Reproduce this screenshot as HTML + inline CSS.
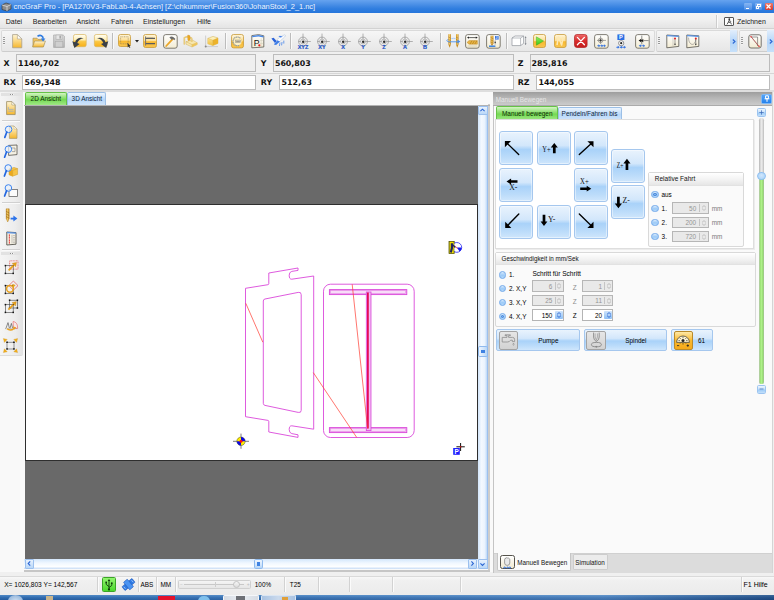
<!DOCTYPE html>
<html lang="de">
<head>
<meta charset="utf-8">
<title>cncGraF Pro</title>
<style>
*{box-sizing:border-box;margin:0;padding:0}
html,body{width:774px;height:600px;overflow:hidden;background:#f0f0f0}
body{position:relative;font-family:"Liberation Sans",sans-serif;font-size:7px;color:#000;line-height:1}
.a{position:absolute}
.t{position:absolute;white-space:nowrap;line-height:1}
svg{position:absolute;overflow:visible}
#title{left:0;top:0;width:774px;height:13px;background:linear-gradient(#66a3ef 0,#4a8fe6 35%,#2f7ddf 68%,#2676db)}
#title .t{color:#edf3fd;font-size:7.45px;left:13.5px;top:2.6px}
#menu{left:0;top:13px;width:774px;height:16px;background:linear-gradient(#f4f4f4,#efefef 50%,#e4e4e4);border-bottom:1px solid #d2d2d2}
#menu .t{top:5.2px;font-size:7px;color:#1a1a1a}
.tbar{position:absolute;top:30px;height:22px;background:linear-gradient(#f6f6f6,#eeeeee 50%,#e7e7e7);border:1px solid #dadada;border-bottom-color:#cdcdcd;border-radius:2px}
.grip{position:absolute;width:2px;height:8px;top:37px;background:repeating-linear-gradient(#9a9a9a 0 1px,#f4f4f4 1px 2px)}
.vsep{position:absolute;width:1px;top:33px;height:16px;background:#bcbcbc;box-shadow:1px 0 0 #fafafa}
.chev{position:absolute;top:30px;height:22px;background:linear-gradient(#e2eefc,#b4d5f8 55%,#c6e0fa)}
.bold{font-family:"DejaVu Sans","Liberation Sans",sans-serif;font-weight:bold;font-size:7.9px;color:#111}
.box{position:absolute;border:1px solid #bcbcbc;background:#efefef}
.boxw{position:absolute;border:1px solid #bcbcbc;background:#fff}
.tab{position:absolute;border:1px solid #9bbfe6;border-bottom:none;border-radius:2px 2px 0 0;font-size:6.4px}
.tab.g{background:linear-gradient(#d4f4c4,#74da52 55%,#a0e786);border-color:#66c247}
.tab.b{background:linear-gradient(#edf5fe,#b7d7f9 55%,#cfe4fb)}
.mb{position:absolute;width:34px;height:34px;border:1px solid #a5c7ee;border-radius:3px;background:linear-gradient(#e9f3fd 0%,#d3e7fb 42%,#a9d2f9 55%,#bcdcfa 80%,#cfe6fc 100%);box-shadow:inset 0 0 0 1px rgba(255,255,255,.45)}
.grp{position:absolute;border:1px solid #d9d9d9;border-radius:2px;background:#fafafa}
.grp .h{position:absolute;left:0;top:0;right:0;height:12px;background:linear-gradient(#fff,#f3f3f3 55%,#e6e6e6);border-bottom:1px solid #e2e2e2}
.rad{position:absolute;width:7.6px;height:7.6px;border-radius:50%;border:.9px solid #72a9ea;background:linear-gradient(#d6e9fc,#9ccaf7 55%,#b4d8fa)}
.rad.on::after{content:"";position:absolute;box-sizing:border-box;left:1.1px;top:1.1px;width:3.6px;height:3.6px;border-radius:50%;background:#7db2ee;border:.7px solid #3f7fd8}
.sp{position:absolute;height:11.5px;border:1px solid #b6b6b6;background:#e9e9e9}
.sp.w{background:#fff;border-color:#b4b4b4}
.sp .n{position:absolute;top:2.6px;font-size:6.4px;color:#949494;text-align:right}
.sp.w .n{color:#000}
.sp .d{position:absolute;top:1px;bottom:1px;width:1px;background:#c4c4c4}
.sp .u{position:absolute;top:1px;bottom:1px;background:#e2e2e2}
.sp.w .u{background:linear-gradient(#cfe4fb,#8fc0f5);border-radius:1px}
.s64{font-size:6.4px}
.wb{position:absolute;border:1px solid #a5c7ee;border-radius:2px;background:linear-gradient(#e9f3fd 0%,#d3e7fb 42%,#a9d2f9 55%,#bcdcfa 80%,#cfe6fc 100%)}
.ib{position:absolute;border:1px solid #a3a3a3;border-radius:2px;background:linear-gradient(#e6e6e6,#d2d2d2)}
.ssep{position:absolute;top:577px;height:15px;width:1px;background:#d2d2d2;box-shadow:1px 0 0 #fbfbfb}
</style>
</head>
<body>
<div id="title" class="a">
<svg style="left:1px;top:1px" width="11" height="11" viewBox="0 0 11 11"><path d="M1 4 L5 2 L10 3.5 L10 8 L6 10 L1 8.5Z" fill="#8d8d8d" stroke="#3c3c3c" stroke-width=".7"/><path d="M1 4 L6 5.5 L10 3.5 M6 5.5 L6 10" stroke="#e8e8e8" stroke-width=".7" fill="none"/></svg>
<span class="t">cncGraF Pro - [PA1270V3-FabLab-4-Achsen] [Z:\chkummer\Fusion360\JohanStool_2_1.nc]</span>
<div class="a" style="left:744px;top:3px;width:7.6px;height:7px;border-radius:1.2px;background:linear-gradient(#86b6f3,#4f8fe6)"></div>
<div class="a" style="left:745.5px;top:7.6px;width:3.6px;height:1.3px;background:#fff"></div>
<div class="a" style="left:754.6px;top:3px;width:7.6px;height:7px;border-radius:1.2px;background:linear-gradient(#86b6f3,#4f8fe6)"></div>
<div class="a" style="left:757.3px;top:4.2px;width:3.6px;height:3px;border:.8px solid #fff;border-top-width:1.2px"></div>
<div class="a" style="left:755.8px;top:5.9px;width:3.6px;height:3px;border:.8px solid #fff;border-top-width:1.2px;background:#5a96ea"></div>
<div class="a" style="left:765.2px;top:3px;width:7.6px;height:7px;border-radius:1.2px;background:linear-gradient(#f07a6a,#d93a2c)"></div>
<svg style="left:766.4px;top:4.2px" width="5" height="5" viewBox="0 0 5 5"><path d="M.5 .5L4.5 4.5M4.5 .5L.5 4.5" stroke="#fff" stroke-width="1.2"/></svg>
</div>
<div id="menu" class="a">
<span class="t" style="left:5.8px">Datei</span>
<span class="t" style="left:32.8px">Bearbeiten</span>
<span class="t" style="left:76.5px">Ansicht</span>
<span class="t" style="left:111px">Fahren</span>
<span class="t" style="left:143px">Einstellungen</span>
<span class="t" style="left:197px">Hilfe</span>
<div class="a" style="left:716px;top:2px;width:1px;height:13px;background:#cdcdcd;box-shadow:1px 0 0 #fbfbfb"></div>
<div class="a" style="left:724px;top:4.2px;width:9.5px;height:9.2px;border:.8px solid #555;border-radius:1px;background:#fdfdfd"></div>
<svg style="left:725.5px;top:5.3px" width="7" height="7" viewBox="0 0 7 7"><circle cx="3.3" cy="1.2" r=".9" fill="#333"/><path d="M3.3 2 L2.3 4.2 L1 6.4 M2.3 4.2 L4.6 4.6 L5.5 6.4 M3 2.6 L5.2 3.6" stroke="#333" stroke-width=".8" fill="none"/></svg>
<span class="t" style="left:737px">Zeichnen</span>
</div>
<svg width="0" height="0" style="position:absolute"><defs>
<linearGradient id="gO" x1="0" y1="0" x2="0" y2="1"><stop offset="0" stop-color="#fff6da"/><stop offset=".46" stop-color="#fde09a"/><stop offset=".56" stop-color="#f8b930"/><stop offset="1" stop-color="#f9c650"/></linearGradient>
<linearGradient id="gO2" x1="0" y1="0" x2="0" y2="1"><stop offset="0" stop-color="#fffef6"/><stop offset=".42" stop-color="#ffefb6"/><stop offset=".58" stop-color="#fbc744"/><stop offset="1" stop-color="#f8b018"/></linearGradient>
<linearGradient id="gY" x1="0" y1="0" x2="0" y2="1"><stop offset="0" stop-color="#fff6d6"/><stop offset="1" stop-color="#f5b62c"/></linearGradient>
<linearGradient id="gY2" x1="0" y1="0" x2="0" y2="1"><stop offset="0" stop-color="#fae08a"/><stop offset="1" stop-color="#f0bd3a"/></linearGradient>
<linearGradient id="gC" x1="0" y1="0" x2="0" y2="1"><stop offset="0" stop-color="#ffffff"/><stop offset="1" stop-color="#f3ecd2"/></linearGradient>
<linearGradient id="gG" x1="0" y1="0" x2="0" y2="1"><stop offset="0" stop-color="#dcdcdc"/><stop offset="1" stop-color="#b4b4b4"/></linearGradient>
<linearGradient id="gR" x1="0" y1="0" x2="0" y2="1"><stop offset="0" stop-color="#ee6b6b"/><stop offset=".5" stop-color="#d92a2a"/><stop offset="1" stop-color="#c21d1d"/></linearGradient>
<linearGradient id="gB" x1="0" y1="0" x2="0" y2="1"><stop offset="0" stop-color="#6db1ff"/><stop offset="1" stop-color="#1c62d8"/></linearGradient>
<linearGradient id="gD" x1="0" y1="0" x2="1" y2="0"><stop offset="0" stop-color="#c98a1c"/><stop offset=".5" stop-color="#f7d36b"/><stop offset="1" stop-color="#b97912"/></linearGradient>
<linearGradient id="gGr" x1="0" y1="0" x2="0" y2="1"><stop offset="0" stop-color="#8cf05a"/><stop offset="1" stop-color="#3cc41c"/></linearGradient>
</defs></svg>
<div class="tbar" style="left:1px;width:654px"></div>
<div class="tbar" style="left:655.5px;width:82px"></div>
<div class="tbar" style="left:738.5px;width:36px"></div>
<div class="chev" style="left:729.5px;width:7.5px"></div>
<div class="chev" style="left:766.5px;width:7.5px"></div>
<svg style="left:731.5px;top:39px" width="4" height="5" viewBox="0 0 4 5"><path d="M.8 .5 L3 2.5 L.8 4.5" fill="none" stroke="#2b66d4" stroke-width="1.1"/></svg>
<svg style="left:769px;top:39px" width="4" height="5" viewBox="0 0 4 5"><path d="M.8 .5 L3 2.5 L.8 4.5" fill="none" stroke="#2b66d4" stroke-width="1.1"/></svg>
<div class="grip" style="left:3px"></div>
<div class="grip" style="left:657.5px"></div>
<div class="grip" style="left:740.5px"></div>
<div class="vsep" style="left:112px"></div>
<div class="vsep" style="left:224.5px"></div>
<div class="vsep" style="left:290.3px"></div>
<div class="vsep" style="left:439.5px"></div>
<div class="vsep" style="left:505.6px"></div>
<svg style="left:12.4px;top:33.8px" width="10.4" height="14.4" viewBox="0 0 10.4 14.4"><path d="M.6 .6 H5.4 L9.8 5 V13.8 H.6Z" fill="url(#gY)" stroke="#a9a08a" stroke-width=".8"/><path d="M5.4 .6 V5 H9.8Z" fill="#fffef8" stroke="#a9a08a" stroke-width=".6"/></svg>
<svg style="left:31.6px;top:34px" width="14" height="14" viewBox="0 0 14 14"><path d="M1 4.2 H5 L6 5.4 H11 V12.6 H1Z" fill="#f6c55a" stroke="#a8925c" stroke-width=".7"/><path d="M.6 13 L2.6 7 H13.4 L11.4 13Z" fill="url(#gY)" stroke="#a8925c" stroke-width=".7"/><path d="M5.5 2.2 C8.5 .4 11.2 1.8 11.2 4.8" fill="none" stroke="#2f7be0" stroke-width="1.6"/><path d="M8.8 4.4 H13.4 L11.1 7.6Z" fill="#2f7be0"/></svg>
<svg style="left:52.6px;top:34px" width="12" height="14" viewBox="0 0 12 14"><path d="M.6 1 H10.2 L11.4 2.2 V13.4 H.6Z" fill="url(#gG)" stroke="#a9a9a9" stroke-width=".7"/><rect x="3" y="1" width="6" height="4.2" fill="#e6e6e6" stroke="#a4a4a4" stroke-width=".5"/><rect x="6.4" y="1.6" width="1.6" height="3" fill="#a8a8a8"/><rect x="2.2" y="7.6" width="7.6" height="5.4" fill="#cfcfcf" stroke="#a9a9a9" stroke-width=".5"/></svg>
<svg style="left:72px;top:33.6px" width="15" height="15" viewBox="0 0 15 15"><rect x="1.5" y=".5" width="12.7" height="12.2" rx="1.8" fill="url(#gO2)" stroke="#d9b45c" stroke-width=".7"/><path d="M11.6 4.3 C8 2.8 4 4.4 3.1 8.3 L.3 7.2 L2.4 14 L7.6 9.9 L5.3 9.1 C6.2 6.4 8.6 4.8 11.6 4.3Z" fill="#3a4048"/></svg>
<svg style="left:92.6px;top:33.6px" width="15" height="15" viewBox="0 0 15 15"><g transform="translate(15.6,0) scale(-1,1)"><rect x="1.5" y=".5" width="12.7" height="12.2" rx="1.8" fill="url(#gO2)" stroke="#d9b45c" stroke-width=".7"/><path d="M11.6 4.3 C8 2.8 4 4.4 3.1 8.3 L.3 7.2 L2.4 14 L7.6 9.9 L5.3 9.1 C6.2 6.4 8.6 4.8 11.6 4.3Z" fill="#3a4048"/></g></svg>
<svg style="left:117.6px;top:34px" width="14" height="14" viewBox="0 0 14 14"><rect x="0.5" y="0.5" width="12" height="12" rx="2" fill="url(#gO)" stroke="#c89b3a" stroke-width="0.8"/><rect x="2.6" y="2.8" width="7.6" height="7" fill="none" stroke="#8a7a5a" stroke-width=".6" stroke-dasharray="1 .7"/><path d="M9.4 8.8 L12.6 12 L11.4 12.2 L12.4 13.8 L11.6 14 L10.8 12.6 L9.8 13.4Z" fill="#333"/></svg>
<svg style="left:134.6px;top:40.4px" width="4" height="3" viewBox="0 0 4 3"><path d="M0 0H4L2 2.6Z" fill="#222"/></svg>
<svg style="left:142.6px;top:34px" width="14" height="14" viewBox="0 0 14 14"><rect x="0.5" y="0.5" width="13" height="13" rx="2" fill="url(#gO)" stroke="#c89b3a" stroke-width="0.8"/><path d="M2 4.4 H12 M2 9.6 H12" stroke="#5b5b5b" stroke-width="1.1"/><path d="M2.6 2.4 V11.6" stroke="#777" stroke-width="1"/><path d="M5 4.4V3.2M7 4.4V3.2M9 4.4V3.2" stroke="#777" stroke-width=".5"/></svg>
<svg style="left:163px;top:33.6px" width="15" height="15" viewBox="0 0 15 15"><rect x="0.6" y="0.6" width="13.6" height="13.6" rx="2.2" fill="url(#gC)" stroke="#6a675c" stroke-width="0.85"/><path d="M3.2 12 L9.6 5.2" stroke="#eaa62a" stroke-width="1.8" stroke-linecap="round"/><path d="M6.4 3.2 C8.6 1.8 10.6 2.6 12.4 5 L11.2 6.2 L10 5 L8.8 6 L7.6 4.8Z" fill="#6b6b6b"/></svg>
<svg style="left:183.4px;top:34px" width="15" height="14" viewBox="0 0 15 14"><path d="M3 7.6 L9.4 6 L14.2 8.8 L14.2 10.6 L9 13 L3 10.2Z" fill="#f8e7ad" stroke="#d0b268" stroke-width=".5"/><path d="M3 7.6 L9 10.6 L14.2 8.8 M9 10.6 V13" stroke="#cfae5c" stroke-width=".5" fill="none"/><path d="M9 10.6 L14.2 8.8 V10.6 L9 13Z" fill="#eec55a"/><path d="M1.4 10.4 V3.6 L4.2 2.6 L8.6 4.2 V8" fill="none" stroke="#d8b660" stroke-width="1.5" stroke-linejoin="round"/><path d="M1.4 10.4 V3.6 L4.2 2.6 L8.6 4.2 V8" fill="none" stroke="#f7dc8c" stroke-width=".7" stroke-linejoin="round"/><path d="M4.8 1 L7 1.8 V5.6 L5.8 7 L4.8 5.2Z" fill="#f0ac22" stroke="#c98c18" stroke-width=".4"/></svg>
<svg style="left:204px;top:34px" width="15" height="14" viewBox="0 0 15 14"><path d="M1.6 1.6 V12.6 H14" stroke="#b4b4b4" stroke-width=".55" fill="none"/><circle cx="1.7" cy="12.5" r="1" fill="#8a8a8a"/><path d="M3.8 4.4 L9 2.4 L14 4 L14 9.4 L8.8 11.6 L3.8 9.8Z" fill="#fdf0ba" stroke="#d2b050" stroke-width=".5"/><path d="M3.8 4.4 L8.8 6.2 V11.6 L3.8 9.8Z" fill="url(#gY2)"/><path d="M8.8 6.2 L14 4 V9.4 L8.8 11.6Z" fill="#ecb22a"/><path d="M3.8 4.4 L8.8 6.2 L14 4 M8.8 6.2 V11.6" stroke="#d2a840" stroke-width=".4" fill="none"/></svg>
<svg style="left:230.6px;top:33.8px" width="13" height="14.4" viewBox="0 0 13 14.4"><rect x="0.5" y="0.5" width="12" height="13.4" rx="2" fill="url(#gO)" stroke="#c89b3a" stroke-width="0.8"/><circle cx="6.5" cy="7.4" r="4.3" fill="#fdf0c4" stroke="#e9c05c" stroke-width=".5"/><path d="M9.2 4 A4.4 4.4 0 1 0 8.6 11.2" fill="none" stroke="#7f95b4" stroke-width="1.1" stroke-dasharray="1.1 .6"/><rect x="4.2" y="6" width="5.6" height="2.8" fill="#d9d2bc" stroke="#8f8870" stroke-width=".4"/><path d="M5.2 7.4 H8.8" stroke="#6e6a5c" stroke-width=".6"/></svg>
<svg style="left:250.6px;top:33.6px" width="14" height="15" viewBox="0 0 14 15"><path d="M.8 1.6 L7.6 .6 L12.8 1.8 V13 L.8 13.8Z" fill="url(#gC)" stroke="#5b5952" stroke-width=".8" stroke-linejoin="round"/><path d="M1.2 1.9 L7.6 1 L12.4 2.1 V3.5 L7.6 2.5 L1.2 3.3Z" fill="#4a8ae8"/><path d="M10.2 4.2 V12.4 M8.8 6.6 H12.2 M8.8 9.4 H12.2" stroke="#c2bda8" stroke-width=".4"/><text x="2.8" y="11.6" textLength="5.8" lengthAdjust="spacingAndGlyphs" font-family="Liberation Sans,sans-serif" font-size="9.8" fill="#111">P</text><circle cx="8.3" cy="11.3" r="1.1" fill="#e81818"/></svg>
<svg style="left:271px;top:34.4px" width="15" height="13" viewBox="0 0 15 13"><path d="M3.4 8.6 C6 5 9.6 2.4 13.6 .8 C14.8 .8 14.4 2.2 13.6 3 C11 5.6 8 8 5 10.4Z" fill="#fbfcfe" stroke="#a9bcd6" stroke-width=".5"/><path d="M.4 4.4 L2.6 3.8 L5.6 7 L4 9Z" fill="#2a62d8"/><path d="M6.4 6.2 L2.8 10.6 L5 11 L9 7.4Z" fill="#3f7ee8"/><path d="M9.6 3.6 L7.4 2.2 L9 1.8 L11.8 2.8Z" fill="#3f7ee8"/><path d="M9 8.6 L8.4 12 M11 8 L10.6 11.4 M12.8 6.6 L12.8 9.6" stroke="#4a86ea" stroke-width=".8"/></svg>
<svg style="left:294.6px;top:33.1px" width="16" height="17" viewBox="0 0 16 17"><path d="M8 .6 V10.6 M3.4 8.5 H15.8" stroke="#7a7a7a" stroke-width=".55"/><circle cx="8" cy="8.5" r="4.4" fill="none" stroke="#8e8e8e" stroke-width=".7"/><circle cx="8" cy="8.5" r="2.4" fill="#f4f4f4" stroke="#8a8a8a" stroke-width=".55"/><circle cx="8.2" cy="8.8" r="1.25" fill="#2c2c2c"/><text x="8" y="15.9" text-anchor="middle" font-family="Liberation Sans,sans-serif" font-weight="bold" font-size="5.5" fill="#1f55c8" stroke="#1f55c8" stroke-width=".2">XYZ</text></svg>
<svg style="left:314.3px;top:33.1px" width="16" height="17" viewBox="0 0 16 17"><path d="M8 .6 V10.6 M3.4 8.5 H15.8" stroke="#7a7a7a" stroke-width=".55"/><circle cx="8" cy="8.5" r="4.4" fill="none" stroke="#8e8e8e" stroke-width=".7"/><circle cx="8" cy="8.5" r="2.4" fill="#f4f4f4" stroke="#8a8a8a" stroke-width=".55"/><circle cx="8.2" cy="8.8" r="1.25" fill="#2c2c2c"/><text x="8" y="15.9" text-anchor="middle" font-family="Liberation Sans,sans-serif" font-weight="bold" font-size="5.5" fill="#1f55c8" stroke="#1f55c8" stroke-width=".2">XY</text></svg>
<svg style="left:334.7px;top:33.1px" width="16" height="17" viewBox="0 0 16 17"><path d="M8 .6 V10.6 M3.4 8.5 H15.8" stroke="#7a7a7a" stroke-width=".55"/><circle cx="8" cy="8.5" r="4.4" fill="none" stroke="#8e8e8e" stroke-width=".7"/><circle cx="8" cy="8.5" r="2.4" fill="#f4f4f4" stroke="#8a8a8a" stroke-width=".55"/><circle cx="8.2" cy="8.8" r="1.25" fill="#2c2c2c"/><text x="8" y="15.9" text-anchor="middle" font-family="Liberation Sans,sans-serif" font-weight="bold" font-size="5.5" fill="#1f55c8" stroke="#1f55c8" stroke-width=".2">X</text></svg>
<svg style="left:355.3px;top:33.1px" width="16" height="17" viewBox="0 0 16 17"><path d="M8 .6 V10.6 M3.4 8.5 H15.8" stroke="#7a7a7a" stroke-width=".55"/><circle cx="8" cy="8.5" r="4.4" fill="none" stroke="#8e8e8e" stroke-width=".7"/><circle cx="8" cy="8.5" r="2.4" fill="#f4f4f4" stroke="#8a8a8a" stroke-width=".55"/><circle cx="8.2" cy="8.8" r="1.25" fill="#2c2c2c"/><text x="8" y="15.9" text-anchor="middle" font-family="Liberation Sans,sans-serif" font-weight="bold" font-size="5.5" fill="#1f55c8" stroke="#1f55c8" stroke-width=".2">Y</text></svg>
<svg style="left:376px;top:33.1px" width="16" height="17" viewBox="0 0 16 17"><path d="M8 .6 V10.6 M3.4 8.5 H15.8" stroke="#7a7a7a" stroke-width=".55"/><circle cx="8" cy="8.5" r="4.4" fill="none" stroke="#8e8e8e" stroke-width=".7"/><circle cx="8" cy="8.5" r="2.4" fill="#f4f4f4" stroke="#8a8a8a" stroke-width=".55"/><circle cx="8.2" cy="8.8" r="1.25" fill="#2c2c2c"/><text x="8" y="15.9" text-anchor="middle" font-family="Liberation Sans,sans-serif" font-weight="bold" font-size="5.5" fill="#1f55c8" stroke="#1f55c8" stroke-width=".2">Z</text></svg>
<svg style="left:396.7px;top:33.1px" width="16" height="17" viewBox="0 0 16 17"><path d="M8 .6 V10.6 M3.4 8.5 H15.8" stroke="#7a7a7a" stroke-width=".55"/><circle cx="8" cy="8.5" r="4.4" fill="none" stroke="#8e8e8e" stroke-width=".7"/><circle cx="8" cy="8.5" r="2.4" fill="#f4f4f4" stroke="#8a8a8a" stroke-width=".55"/><circle cx="8.2" cy="8.8" r="1.25" fill="#2c2c2c"/><text x="8" y="15.9" text-anchor="middle" font-family="Liberation Sans,sans-serif" font-weight="bold" font-size="5.5" fill="#1f55c8" stroke="#1f55c8" stroke-width=".2">A</text></svg>
<svg style="left:417.3px;top:33.1px" width="16" height="17" viewBox="0 0 16 17"><path d="M8 .6 V10.6 M3.4 8.5 H15.8" stroke="#7a7a7a" stroke-width=".55"/><circle cx="8" cy="8.5" r="4.4" fill="none" stroke="#8e8e8e" stroke-width=".7"/><circle cx="8" cy="8.5" r="2.4" fill="#f4f4f4" stroke="#8a8a8a" stroke-width=".55"/><circle cx="8.2" cy="8.8" r="1.25" fill="#2c2c2c"/><text x="8" y="15.9" text-anchor="middle" font-family="Liberation Sans,sans-serif" font-weight="bold" font-size="5.5" fill="#1f55c8" stroke="#1f55c8" stroke-width=".2">B</text></svg>
<svg style="left:445.6px;top:34px" width="15" height="14" viewBox="0 0 15 14"><rect x="2.4" y=".2" width="2.5" height="10.4" fill="url(#gD)"/><path d="M2.4 10.6 h2.5 l-1.25 3.2Z" fill="#c68a1e"/><path d="M2.4 3 l2.2 1.2 M2.4 5.4 l2.2 1.2 M2.4 7.8 l2.2 1.2" stroke="#9c6a10" stroke-width=".5"/><rect x="10" y=".2" width="2.5" height="10.4" fill="url(#gD)"/><path d="M10 10.6 h2.5 l-1.25 3.2Z" fill="#c68a1e"/><path d="M10 3 l2.2 1.2 M10 5.4 l2.2 1.2 M10 7.8 l2.2 1.2" stroke="#9c6a10" stroke-width=".5"/><path d="M2 5.4 C.2 6.4 .6 7.6 3 7.8 H11.4" stroke="#4a92f2" stroke-width=".9" fill="none"/><path d="M14.4 7.6 L11.4 5.8 V9.4Z" fill="#3f8af0"/><path d="M5.4 4.6 C7 4.2 8.4 4.2 9.6 4.6" stroke="#7db2f6" stroke-width=".6" fill="none"/></svg>
<svg style="left:465.4px;top:33.6px" width="15" height="15" viewBox="0 0 15 15"><rect x="0.6" y="0.6" width="13.6" height="13.6" rx="2.2" fill="url(#gC)" stroke="#6a675c" stroke-width="0.85"/><path d="M2.6 3.6 H12.2" stroke="#222" stroke-width=".7"/><path d="M2.2 3.6 l1.8 -1.1 v2.2Z M12.6 3.6 l-1.8 -1.1 v2.2Z" fill="#222"/><path d="M2 8.4 L4 6.6 H12.4 V10.2 H4Z" fill="#e9b545" stroke="#b07c18" stroke-width=".4"/><path d="M5 10 l2 -3.2 M7.4 10 l2 -3.2 M9.8 10 l2 -3.2" stroke="#a87412" stroke-width=".6"/><path d="M2.6 12 H12.2" stroke="#bdb59a" stroke-width=".5"/></svg>
<svg style="left:486px;top:33.6px" width="15" height="15" viewBox="0 0 15 15"><rect x="0.6" y="0.6" width="13.6" height="13.6" rx="2.2" fill="url(#gC)" stroke="#6a675c" stroke-width="0.85"/><rect x="4.6" y="1.6" width="2.8" height="8" fill="url(#gD)"/><path d="M4.6 9.6 h2.8 l-1.4 2.4Z" fill="#c68a1e"/><path d="M4.6 3.4 l2.8 1.4 M4.6 5.8 l2.8 1.4 M4.6 8 l2.8 1.2" stroke="#9c6a10" stroke-width=".5"/><rect x="9" y="2" width="3.6" height="3.6" fill="#2f6fe0"/><path d="M9.8 2.8 h2 l-2 2 h2" stroke="#fff" stroke-width=".5" fill="none"/><path d="M3 12.2 H9.4" stroke="#2f7be0" stroke-width="1.4"/><path d="M9.2 6.4 V10.4" stroke="#444" stroke-width=".5"/><rect x="8.6" y="7.8" width="1.2" height="1.2" fill="#333"/></svg>
<svg style="left:510.6px;top:35px" width="16" height="12" viewBox="0 0 16 12"><path d="M1 3 L4 1 H12.6 V8.4 L9.6 10.6 H1Z" fill="#fff" stroke="#8f949b" stroke-width=".7"/><path d="M1 3 H9.6 V10.6 M9.6 3 L12.6 1" stroke="#8f949b" stroke-width=".6" fill="none"/><path d="M14.6 2.4 V9" stroke="#6b7078" stroke-width=".5"/><path d="M14.6 1.2 l-.9 1.6 h1.8Z M14.6 10 l-.9 -1.6 h1.8Z" fill="#6b7078"/></svg>
<svg style="left:533px;top:34px" width="13" height="14" viewBox="0 0 13 14"><rect x="0.5" y="0.5" width="12" height="13" rx="2" fill="url(#gO)" stroke="#c89b3a" stroke-width="0.8"/><path d="M3.4 2.8 L10.6 7 L3.4 11.2Z" fill="url(#gGr)" stroke="#2fa312" stroke-width=".4"/></svg>
<svg style="left:554px;top:34px" width="13" height="14" viewBox="0 0 13 14"><rect x="0.5" y="0.5" width="11.6" height="13" rx="2" fill="url(#gO)" stroke="#c89b3a" stroke-width="0.8"/><path d="M3 11 L4.4 3 L7.6 11 L9.2 3" stroke="#fde9b4" stroke-width="1.6" fill="none" stroke-linejoin="round"/></svg>
<svg style="left:574px;top:34px" width="14" height="14" viewBox="0 0 14 14"><rect x="0.5" y="0.5" width="12.6" height="13" rx="2.4" fill="url(#gR)" stroke="#b02020" stroke-width="0.7"/><path d="M3.4 3.4 L10.4 10.8 M10.4 3.4 L3.4 10.8" stroke="#fff" stroke-width="1.3" stroke-linecap="round"/></svg>
<svg style="left:593.8px;top:33.6px" width="15" height="15" viewBox="0 0 15 15"><rect x="0.6" y="0.6" width="13.6" height="13.6" rx="2.2" fill="url(#gC)" stroke="#6a675c" stroke-width="0.85"/><path d="M6.6 1.8 V10 M3 6.4 H12" stroke="#555" stroke-width=".5"/><circle cx="6.6" cy="6.4" r="2.3" fill="none" stroke="#777" stroke-width=".6"/><circle cx="6.6" cy="6.4" r="1.1" fill="#333"/><path d="M3.6 11.6 h1.4 l-.4 -.9 l1.4 1.1 l-1.4 1.1 l.4 -.9 h-1.4Z M6.6 11.6 h1.4 l-.4 -.9 l1.4 1.1 l-1.4 1.1 l.4 -.9 h-1.4Z M9.4 11.6 h1.2 l-.4 -.9 l1.4 1.1 l-1.4 1.1 l.4 -.9 h-1.2Z" fill="#2468e0" stroke="#2468e0" stroke-width=".4"/></svg>
<svg style="left:616px;top:33.6px" width="11" height="15" viewBox="0 0 11 15"><rect x="1.4" y=".4" width="7" height="5.6" fill="#2a6ee4"/><text x="2.9" y="5.3" font-family="Liberation Sans,sans-serif" font-weight="bold" font-size="5.6" fill="#fff">P</text><circle cx="5.2" cy="9.2" r="2.6" fill="#fff" stroke="#666" stroke-width=".7"/><circle cx="5.2" cy="9.2" r="1.1" fill="#222"/><path d="M.6 13 h1.6 l-.4 -.9 l1.5 1.1 l-1.5 1.1 l.4 -.9 h-1.6Z M4 13 h1.6 l-.4 -.9 l1.5 1.1 l-1.5 1.1 l.4 -.9 h-1.6Z M7.2 13 h1.4 l-.4 -.9 l1.5 1.1 l-1.5 1.1 l.4 -.9 h-1.4Z" fill="#2468e0" stroke="#2468e0" stroke-width=".4"/></svg>
<svg style="left:635px;top:33.6px" width="15" height="15" viewBox="0 0 15 15"><rect x="0.6" y="0.6" width="13.6" height="13.6" rx="2.2" fill="url(#gC)" stroke="#6a675c" stroke-width="0.85"/><path d="M6.8 1.6 V10.4 M7 6.6 H13.6" stroke="#444" stroke-width=".6"/><path d="M3.6 6.6 L6.4 4.8 L6 6.2 L8.6 5 L7.8 6.6 L8.6 8.2 L6 7 L6.4 8.4Z" fill="#111"/><path d="M4.2 11.6 h1.4 l-.4 -.9 l1.4 1.1 l-1.4 1.1 l.4 -.9 h-1.4Z M7.4 11.6 h1.4 l-.4 -.9 l1.4 1.1 l-1.4 1.1 l.4 -.9 h-1.4Z" fill="#2468e0" stroke="#2468e0" stroke-width=".4"/></svg>
<svg style="left:665.6px;top:33.6px" width="14" height="15" viewBox="0 0 14 15"><path d="M.8 1 L12.8 1.8 V12.4 L.8 13.8Z" fill="url(#gC)" stroke="#55534c" stroke-width=".8" stroke-linejoin="round"/><path d="M1 1 L12.8 1.8 V3 L1 2.2Z" fill="#5a95e8"/><path d="M9 4.4 V11" stroke="#444" stroke-width=".5"/><circle cx="9" cy="4.4" r="1" fill="#e02020"/><path d="M9 11.4 l-.9 -1.6 h1.8Z" fill="#333"/><path d="M7 3.4 V12" stroke="#999" stroke-width=".4"/></svg>
<svg style="left:686.4px;top:33.6px" width="14" height="15" viewBox="0 0 14 15"><path d="M.8 1 L12.8 1.8 V12.4 L.8 13.8Z" fill="url(#gC)" stroke="#55534c" stroke-width=".8" stroke-linejoin="round"/><path d="M1 1 L12.8 1.8 V3 L1 2.2Z" fill="#5a95e8"/><path d="M2.6 3.6 C2.6 12.4 9.6 12.4 9.8 5" stroke="#666" stroke-width=".5" fill="none"/><path d="M9.8 4.4 V11" stroke="#444" stroke-width=".5"/><circle cx="9.8" cy="4.6" r="1" fill="#e02020"/><path d="M9.8 11.4 l-.9 -1.6 h1.8Z" fill="#333"/></svg>
<svg style="left:748.4px;top:33.6px" width="14" height="15" viewBox="0 0 14 15"><rect x=".8" y=".8" width="12.4" height="13.2" rx="2.2" fill="url(#gC)" stroke="#55534c" stroke-width=".8"/><path d="M3.4 3 H9.6 V12 M3.4 3 L10.6 12.2" stroke="#555" stroke-width=".6" fill="none"/><path d="M2.8 2.4 L11 12.4" stroke="#e04040" stroke-width=".5"/><circle cx="11" cy="12.2" r=".7" fill="#e02020"/><circle cx="3" cy="2.8" r=".7" fill="#e02020"/></svg>
<div class="a" style="left:0;top:72.8px;width:774px;height:1px;background:#d6d6d6"></div>
<span class="t bold" style="left:3.6px;top:59.8px">X</span><div class="box" style="left:16px;top:54px;width:240px;height:17.6px"></div><span class="t bold" style="left:17.9px;top:59.8px">1140,702</span>
<span class="t bold" style="left:260.8px;top:59.8px">Y</span><div class="box" style="left:272.8px;top:54px;width:240.8px;height:17.6px"></div><span class="t bold" style="left:274.9px;top:59.8px">560,803</span>
<span class="t bold" style="left:517.8px;top:59.8px">Z</span><div class="box" style="left:529.8px;top:54px;width:240.2px;height:17.6px"></div><span class="t bold" style="left:531.6px;top:59.8px">285,816</span>
<span class="t bold" style="left:3.6px;top:78.8px">RX</span><div class="boxw" style="left:22px;top:74.5px;width:234px;height:15px"></div><span class="t bold" style="left:24.6px;top:78.8px">569,348</span>
<span class="t bold" style="left:260.8px;top:78.8px">RY</span><div class="boxw" style="left:279.4px;top:74.5px;width:234.2px;height:15px"></div><span class="t bold" style="left:281.6px;top:78.8px">512,63</span>
<span class="t bold" style="left:517.8px;top:78.8px">RZ</span><div class="boxw" style="left:536.2px;top:74.5px;width:233.4px;height:15px"></div><span class="t bold" style="left:538.4px;top:78.8px">144,055</span>
<div class="a" style="left:0;top:91.5px;width:22.5px;height:484px;background:#f9f9f9"></div><div class="a" style="left:0;top:91.5px;width:22.5px;height:264.4px;background:linear-gradient(90deg,#f5f5f5,#ededed 65%,#e2e2e2);border-bottom:1px solid #dcdcdc;border-radius:0 0 2px 0"></div>
<div class="a" style="left:1px;top:93px;width:20.5px;height:3.4px;background:#e2e2e2"></div><div class="a" style="left:9.5px;top:94px;width:4px;height:1.4px;background:repeating-linear-gradient(90deg,#8e8e8e 0 1px,#f4f4f4 1px 2px)"></div>
<div class="a" style="left:1px;top:251.6px;width:20.5px;height:3.4px;background:#e2e2e2"></div><div class="a" style="left:9.5px;top:252.6px;width:4px;height:1.4px;background:repeating-linear-gradient(90deg,#8e8e8e 0 1px,#f4f4f4 1px 2px)"></div>
<div class="a" style="left:2px;top:120px;width:18px;height:1px;background:#d0d0d0;box-shadow:0 1px 0 #fafafa"></div>
<div class="a" style="left:2px;top:201.6px;width:18px;height:1px;background:#d0d0d0;box-shadow:0 1px 0 #fafafa"></div>
<div class="a" style="left:2px;top:249px;width:18px;height:1px;background:#d0d0d0;box-shadow:0 1px 0 #fafafa"></div>
<svg style="left:6.4px;top:101px" width="10" height="14.4" viewBox="0 0 10 14.4"><path d="M.6 .6 H5.8 L9.2 4 V13.6 H.6Z" fill="url(#gY)" stroke="#9c8d62" stroke-width=".8"/><path d="M5.8 .6 V4 H9.2Z" fill="#fffdf2" stroke="#9c8d62" stroke-width=".5"/><path d="M2.4 6 V8.4 H7.6 M2.4 10.2 H7.6" stroke="#7fa6dc" stroke-width=".6" fill="none"/></svg>
<svg style="left:3.6px;top:124.6px" width="14" height="15" viewBox="0 0 14 15"><path d="M5.4 1 H10 L13 4 V13.4 H5.4Z" fill="url(#gY)" stroke="#a89a70" stroke-width=".7"/><path d="M10 1 V4 H13Z" fill="#fffdf2" stroke="#a89a70" stroke-width=".4"/><circle cx="4.6" cy="4.4" r="3.3" fill="#e6f0fc" fill-opacity=".7" stroke="#3f86f0" stroke-width="1"/><path d="M2.8 7.0 L0.7999999999999998 12.4" stroke="#2468e0" stroke-width="1.7" stroke-linecap="round"/></svg>
<svg style="left:3.6px;top:144.4px" width="14" height="15" viewBox="0 0 14 15"><path d="M4.6 1.4 L13 1 V10.6 L4.6 11.4Z" fill="#f5f1e4" stroke="#55534c" stroke-width=".8"/><path d="M7 4 H11 V7.6 H8" stroke="#666" stroke-width=".5" fill="none"/><circle cx="4.4" cy="5.2" r="3.3" fill="#e6f0fc" fill-opacity=".7" stroke="#3f86f0" stroke-width="1"/><path d="M2.6000000000000005 7.800000000000001 L0.6000000000000005 13.2" stroke="#2468e0" stroke-width="1.7" stroke-linecap="round"/></svg>
<svg style="left:3.6px;top:164.2px" width="14" height="14" viewBox="0 0 14 14"><path d="M5 5 L10 3.4 L13.6 4.6 V10.4 L8.6 12.2 L5 10.8Z" fill="#f6c347" stroke="#c99c30" stroke-width=".5"/><path d="M5 5 L8.6 6.4 L13.6 4.6 M8.6 6.4 V12.2" stroke="#c99c30" stroke-width=".5" fill="none"/><path d="M5 5 L8.6 6.4 V12.2 L5 10.8Z" fill="#eaa81e"/><circle cx="4.2" cy="4" r="3.3" fill="#e6f0fc" fill-opacity=".7" stroke="#3f86f0" stroke-width="1"/><path d="M2.4000000000000004 6.6 L0.40000000000000036 12" stroke="#2468e0" stroke-width="1.7" stroke-linecap="round"/></svg>
<svg style="left:3.6px;top:183.6px" width="14" height="15" viewBox="0 0 14 15"><rect x="5" y="5.6" width="8.4" height="6.8" fill="#fbfbfb" stroke="#555" stroke-width=".7"/><circle cx="4.4" cy="4" r="3.3" fill="#e6f0fc" fill-opacity=".7" stroke="#3f86f0" stroke-width="1"/><path d="M2.6000000000000005 6.6 L0.6000000000000005 12" stroke="#2468e0" stroke-width="1.7" stroke-linecap="round"/></svg>
<svg style="left:4px;top:208px" width="14" height="15" viewBox="0 0 14 15"><path d="M2.2 .8 H5.2 V10.4 L3.7 14 L2.2 10.4Z" fill="url(#gD)" stroke="#a8741a" stroke-width=".4"/><path d="M2.2 3.4 l3 1.6 M2.2 6 l3 1.6 M2.2 8.6 l3 1.6" stroke="#8e600c" stroke-width=".6"/><path d="M6.6 10.6 H10" stroke="#2a72ea" stroke-width="1.8"/><path d="M9.4 7.6 L13.4 10.6 L9.4 13.6Z" fill="#2a72ea"/></svg>
<svg style="left:5.6px;top:231.4px" width="11" height="15" viewBox="0 0 11 15"><path d="M.8 1 L10 1.6 V13.2 L.8 14Z" fill="#f7f3e6" stroke="#55534c" stroke-width=".9" stroke-linejoin="round"/><path d="M1 1 L10 1.6 V2.8 L1 2.3Z" fill="#5a95e8"/><path d="M3.4 3.6 V12.6" stroke="#e02020" stroke-width="1.2" stroke-dasharray="1.2 .7"/><path d="M6 3.8 V12.4" stroke="#888" stroke-width=".5"/><path d="M7.2 4.6H8.8M7.2 6.4H8.8M7.2 8.2H8.8M7.2 10H8.8M7.2 11.6H8.8" stroke="#777" stroke-width=".5"/></svg>
<svg style="left:4px;top:260px" width="15" height="15" viewBox="0 0 15 15"><rect x="5.6" y=".8" width="8.4" height="8.4" fill="#fde3e3" fill-opacity=".5" stroke="#e04040" stroke-width=".6" stroke-dasharray="1 .6"/><rect x="1.4" y="5.6" width="7.8" height="7.8" fill="none" stroke="#444" stroke-width=".6"/><rect x="0.65" y="4.85" width="1.5" height="1.5" fill="#111"/><rect x="8.45" y="4.85" width="1.5" height="1.5" fill="#111"/><rect x="0.65" y="12.65" width="1.5" height="1.5" fill="#111"/><rect x="8.45" y="12.65" width="1.5" height="1.5" fill="#111"/><path d="M4.6 10.4 L9.6 5.4" stroke="#e9a21c" stroke-width="1.7"/><path d="M12.6 2.4 l-4.4 .9 l3.5 3.5Z" fill="#e9a21c" stroke="#b57a10" stroke-width=".3"/></svg>
<svg style="left:4px;top:280px" width="15" height="15" viewBox="0 0 15 15"><path d="M9.4 1 L14 5.6 L9.4 10.2 L4.8 5.6Z" fill="none" stroke="#e04040" stroke-width=".6"/><rect x="1.4" y="5.6" width="7.8" height="7.8" fill="none" stroke="#444" stroke-width=".6"/><rect x="0.65" y="4.85" width="1.5" height="1.5" fill="#111"/><rect x="8.45" y="4.85" width="1.5" height="1.5" fill="#111"/><rect x="0.65" y="12.65" width="1.5" height="1.5" fill="#111"/><rect x="8.45" y="12.65" width="1.5" height="1.5" fill="#111"/><circle cx="6" cy="8.8" r="3.4" fill="none" stroke="#e9a21c" stroke-width="1.5"/><path d="M8.2 4 l3.4 1 l-2.2 2.6Z" fill="#e9a21c"/></svg>
<svg style="left:4px;top:299px" width="15" height="15" viewBox="0 0 15 15"><rect x="5.6" y="1.2" width="7.8" height="7.8" fill="none" stroke="#444" stroke-width=".6"/><rect x="4.85" y="0.45" width="1.5" height="1.5" fill="#111"/><rect x="12.65" y="0.45" width="1.5" height="1.5" fill="#111"/><rect x="4.85" y="8.25" width="1.5" height="1.5" fill="#111"/><rect x="12.65" y="8.25" width="1.5" height="1.5" fill="#111"/><rect x="1.4" y="5.6" width="7.8" height="7.8" fill="none" stroke="#444" stroke-width=".6"/><rect x="0.65" y="4.85" width="1.5" height="1.5" fill="#111"/><rect x="8.45" y="4.85" width="1.5" height="1.5" fill="#111"/><rect x="0.65" y="12.65" width="1.5" height="1.5" fill="#111"/><rect x="8.45" y="12.65" width="1.5" height="1.5" fill="#111"/><path d="M4.4 10.6 L9.4 5.6" stroke="#e9a21c" stroke-width="1.7"/><path d="M12.4 2.6 l-4.4 .9 l3.5 3.5Z" fill="#e9a21c" stroke="#b57a10" stroke-width=".3"/></svg>
<svg style="left:4px;top:319px" width="15" height="13" viewBox="0 0 15 13"><path d="M1 9.6 H13.6" stroke="#777" stroke-width=".5" stroke-dasharray="1 .6"/><path d="M9 2.6 C12 2.6 13.8 5.4 13.6 9.4 H9.6Z" fill="#fde3e3" fill-opacity=".6" stroke="#e04040" stroke-width=".5"/><path d="M2 9.2 L4 3.6 L5.4 9.2 M6 9.2 L7.4 4.4 L8.6 9.2" stroke="#444" stroke-width=".6" fill="none"/><path d="M3 9.8 C5 11.4 8 11.2 10 9.4" stroke="#e9a21c" stroke-width="1.4" fill="none"/><path d="M9 7.6 l3.2 .6 l-2 2.6Z" fill="#e9a21c"/></svg>
<svg style="left:3.4px;top:337.8px" width="15" height="15" viewBox="0 0 15 15"><rect x="4" y="4.2" width="7" height="6.8" fill="none" stroke="#555" stroke-width=".6"/><rect x="3.3" y="3.5" width="1.5" height="1.5" fill="#111"/><rect x="10.2" y="3.5" width="1.5" height="1.5" fill="#111"/><rect x="3.3" y="10.2" width="1.5" height="1.5" fill="#111"/><rect x="10.2" y="10.2" width="1.5" height="1.5" fill="#111"/><path d="M.4 .6 L4.2 1.4 L1.4 4.4Z M14.6 .6 L10.8 1.4 L13.6 4.4Z M.4 14.6 L4.2 13.8 L1.4 10.8Z M14.6 14.6 L10.8 13.8 L13.6 10.8Z" fill="#f2b01e" stroke="#c88a12" stroke-width=".3"/></svg>
<div class="a" style="left:0;top:90px;width:774px;height:1.6px;background:#dedede"></div><div class="a" style="left:22.6px;top:91.6px;width:470.6px;height:484px;background:#f9f9f9"></div>
<div class="tab g" style="left:24.5px;top:91.6px;width:42.3px;height:13px"></div><span class="t" style="left:30.6px;top:95.6px;font-size:6.4px;color:#0c2a05">2D Ansicht</span>
<div class="tab b" style="left:66.8px;top:92.4px;width:38.8px;height:12.2px"></div><span class="t" style="left:71.6px;top:96px;font-size:6.4px;color:#0e1f3c">3D Ansicht</span>
<div class="a" style="left:24.6px;top:105.5px;width:453px;height:453.3px;background:#696969"></div>
<div class="a" style="left:25.1px;top:204px;width:452.5px;height:256.5px;background:#fff;border:1.3px solid #2e2e2e"></div>
<div class="a" style="left:477.6px;top:105.2px;width:10.6px;height:463.8px;background:linear-gradient(90deg,#d3e6fb,#f4f9ff 40%,#eaf3fe 75%,#bcd8f7);border-right:1px solid #9cc0ee"></div>
<div class="a" style="left:478px;top:105.6px;width:9.6px;height:9.6px;background:linear-gradient(#e8f2fe,#b9d7f8);border:.6px solid #9cc0ee;border-radius:1px"></div>
<div class="a" style="left:478px;top:559.2px;width:9.6px;height:9.6px;background:linear-gradient(#e8f2fe,#b9d7f8);border:.6px solid #9cc0ee;border-radius:1px"></div>
<div class="a" style="left:478.3px;top:346.4px;width:9.4px;height:10.2px;background:linear-gradient(90deg,#eef5fe,#d6e8fc 50%,#b6d6f8);border:.7px solid #8fbaee;border-radius:1.8px"></div>
<div class="a" style="left:481.2px;top:350px;width:3.4px;height:2.8px;background:#3f82e2"></div>
<svg style="left:480.4px;top:108px" width="5" height="5" viewBox="0 0 5 5"><path d="M.4 3.2 L2.5 1.2 L4.6 3.2" fill="none" stroke="#2b66d4" stroke-width="1.1"/></svg>
<svg style="left:480.4px;top:562px" width="5" height="5" viewBox="0 0 5 5"><path d="M.4 1.4 L2.5 3.4 L4.6 1.4" fill="none" stroke="#2b66d4" stroke-width="1.1"/></svg>
<div class="a" style="left:24.4px;top:558.8px;width:453.2px;height:10.2px;background:linear-gradient(#d3e6fb,#f0f7ff 40%,#fdfeff 75%,#c8dcf6)"></div>
<div class="a" style="left:24.8px;top:559.2px;width:9.6px;height:9.4px;background:linear-gradient(#e8f2fe,#b9d7f8);border:.6px solid #9cc0ee;border-radius:1px"></div>
<div class="a" style="left:467.6px;top:559.2px;width:9.6px;height:9.4px;background:linear-gradient(#e8f2fe,#b9d7f8);border:.6px solid #9cc0ee;border-radius:1px"></div>
<div class="a" style="left:254.1px;top:559px;width:8.8px;height:9.6px;background:linear-gradient(#eef5fe,#d6e8fc 50%,#b6d6f8);border:.7px solid #8fbaee;border-radius:1.8px"></div>
<div class="a" style="left:256.9px;top:562px;width:3.1px;height:3.8px;background:#3f82e2"></div>
<svg style="left:27.2px;top:561.4px" width="5" height="5" viewBox="0 0 5 5"><path d="M3.2 .4 L1.2 2.5 L3.2 4.6" fill="none" stroke="#2b66d4" stroke-width="1.1"/></svg>
<svg style="left:470.4px;top:561.4px" width="5" height="5" viewBox="0 0 5 5"><path d="M1.4 .4 L3.4 2.5 L1.4 4.6" fill="none" stroke="#2b66d4" stroke-width="1.1"/></svg>
<div class="a" style="left:488.4px;top:104.4px;width:1.4px;height:466.4px;background:#cdcdcd"></div><div class="a" style="left:24.4px;top:570.4px;width:465.4px;height:1.4px;background:#c6c6c6"></div><div class="a" style="left:0;top:572px;width:493px;height:4px;background:#f0f0f0"></div><div class="a" style="left:24.4px;top:104.5px;width:465.4px;height:1px;background:#b2b2b2"></div>
<svg style="left:0;top:0" width="774" height="600" viewBox="0 0 774 600" fill="none"><path d="M245.5 288.3 L268 284.7 Q268.8 284.5 268.8 283.7 L268.8 273 L298 268 L298 270.4 L291.8 271.4 Q289.2 272 289.2 275.2 Q289.2 279.4 291.8 279.2 L313.7 276 L313.7 429.2 L291.8 425.8 Q289.2 425.6 289.2 429.6 Q289.2 433 291.8 433.6 L298 434.8 L298 437.4 L268.8 432 L268.8 421.4 Q268.8 420.6 268 420.4 L245.5 416.7 Z" stroke="#da48da" stroke-width=".9"/><path d="M263.3 301 Q263.3 299.3 265 299 L298.2 292.4 Q301.2 291.8 301.2 294.6 L301.2 410.4 Q301.2 413 298.2 412.4 L265 405.4 Q263.3 405 263.3 403.4 Z" stroke="#da48da" stroke-width=".9"/><rect x="323.5" y="284.2" width="90.7" height="153.3" rx="7" stroke="#da48da" stroke-width=".9"/><rect x="329.4" y="289.6" width="77.4" height="5" fill="#efb4ef" stroke="#da48da" stroke-width=".9"/><rect x="330.6" y="290.8" width="75" height="2.6" fill="#f8dcf8" stroke="#e070e0" stroke-width=".4"/><rect x="329.4" y="427.6" width="77.4" height="5" fill="#efb4ef" stroke="#da48da" stroke-width=".9"/><rect x="330.6" y="428.8" width="75" height="2.6" fill="#f8dcf8" stroke="#e070e0" stroke-width=".4"/><rect x="366.3" y="292" width="4.7" height="138.6" fill="#f1bcf1" stroke="#da48da" stroke-width=".8"/><path d="M367.9 292.5 V428.6" stroke="#e4004e" stroke-width="1.7"/><path d="M245.8 303.3 L262.8 342.2 M313.3 372.6 L356.7 437.4 M352.2 284.3 L367.6 428.3" stroke="#ff3b30" stroke-width=".7"/><path d="M241 433.6 V448.8 M233 441.3 H249" stroke="#444" stroke-width=".7"/><circle cx="241" cy="441.3" r="4.2" fill="#ffee00" stroke="#222" stroke-width=".4"/><path d="M241 441.3 L241 437.1 A4.2 4.2 0 0 1 245.2 441.3Z M241 441.3 L241 445.5 A4.2 4.2 0 0 1 236.8 441.3Z" fill="#0a0ae6"/><circle cx="241" cy="441.3" r="1.5" fill="#ff1010"/><rect x="449" y="241.4" width="5.2" height="12.2" fill="#f1e200" stroke="#6d6a1a" stroke-width=".7"/><path d="M451.6 243 V252.6" stroke="#20206a" stroke-width="1.6"/><circle cx="456.8" cy="247.4" r="4.9" fill="#fff" stroke="#2a2af0" stroke-width=".8"/><path d="M456.8 247.4 L461.7 247.4 A4.9 4.9 0 0 1 459.6 251.4Z" fill="#1a1af0"/><rect x="449.2" y="241.6" width="4.8" height="11.8" fill="#f1e200" stroke="#55531a" stroke-width=".6"/><path d="M451.9 243.2 L451.9 248 L450.8 252.6" stroke="#23235e" stroke-width="2.2" fill="none"/><path d="M453 245 L455.4 247.4" stroke="#23235e" stroke-width="1.4"/><path d="M455 245.8 L457.6 248.8" stroke="#f03030" stroke-width=".7"/><rect x="453.2" y="448" width="6.6" height="6.8" fill="#1c1cff"/><text x="454.4" y="454" font-family="Liberation Sans,sans-serif" font-weight="bold" font-size="6.4" fill="#fff">P</text><path d="M460.6 443 V451 M456.4 446.8 H464.8" stroke="#111" stroke-width="1"/><rect x="459.9" y="446.1" width="1.4" height="1.4" fill="#d01010"/></svg>
<div class="a" style="left:492.6px;top:92.4px;width:280px;height:480.4px;background:#fafafa;border-left:1px solid #c4c4c4;border-right:1px solid #d4d4d4"></div>
<div class="a" style="left:493px;top:92.3px;width:279.4px;height:13.4px;background:linear-gradient(#9d9d9d,#b5b5b5 45%,#cbcbcb);border-bottom:1px solid #ababab"></div>
<span class="t " style="left:495.8px;top:96.8px;font-size:6.35px;color:#e6e6e6">Manuell Bewegen</span><div class="a" style="left:761.2px;top:93.6px;width:10.6px;height:10.2px;border-radius:1.6px;background:linear-gradient(#52a3f7,#2682ec);border:.6px solid #7db9f8"></div>
<svg style="left:763.6px;top:95px" width="6" height="8" viewBox="0 0 6 8"><path d="M1.6 .8 H4.4 V3.6 H1.6Z M.6 3.8 H5.4 M3 3.8 V6.8" stroke="#fff" stroke-width="1" fill="none"/></svg>
<div class="tab g" style="left:495.8px;top:106.4px;width:62px;height:13.2px"></div><span class="t " style="left:502px;top:110.7px;font-size:6.45px;color:#0c2a05">Manuell bewegen</span>
<div class="tab b" style="left:557.8px;top:107.2px;width:64.4px;height:12.4px"></div><span class="t " style="left:561.6px;top:111px;font-size:6.45px;color:#0e1f3c">Pendeln/Fahren bis</span>
<div class="a" style="left:494.6px;top:119.4px;width:259.6px;height:129.6px;background:#fff;border:1px solid #dedede;box-shadow:1px 1px 0 #ececec"></div>
<div class="mb" style="left:499.2px;top:131px"></div><div class="mb" style="left:537px;top:131px"></div><div class="mb" style="left:574.4px;top:131px"></div><div class="mb" style="left:499.2px;top:168px"></div><div class="mb" style="left:574.4px;top:168px"></div><div class="mb" style="left:499.2px;top:205px"></div><div class="mb" style="left:537px;top:205px"></div><div class="mb" style="left:574.4px;top:205px"></div><div class="mb" style="left:610.6px;top:149px"></div><div class="mb" style="left:610.6px;top:185.4px"></div>
<svg style="left:0;top:0" width="774" height="600" viewBox="0 0 774 600"><path d="M518.7 154.5 L507.34 143.54" stroke="#000" stroke-width="1.35" stroke-linecap="round"/><path d="M504.9 141.1 L511 141.1 L504.9 147.2 Z" fill="#000"/><path d="M579.3 154.5 L591.06 143.64" stroke="#000" stroke-width="1.35" stroke-linecap="round"/><path d="M593.5 141.2 L587.4 141.2 L593.5 147.3 Z" fill="#000"/><path d="M518.8 214 L507.64 225.46" stroke="#000" stroke-width="1.35" stroke-linecap="round"/><path d="M505.2 227.9 L511.3 227.9 L505.2 221.8 Z" fill="#000"/><path d="M579.3 214 L591.06 225.46" stroke="#000" stroke-width="1.35" stroke-linecap="round"/><path d="M593.5 227.9 L587.4 227.9 L593.5 221.8 Z" fill="#000"/><path d="M554.3 142.9 L557.8 147.5 H555.65 V153.3 H552.95 V147.5 H550.8Z" fill="#000"/><path d="M506.5 181.5 L511.1 178.6 V180.3 H517.5 V182.7 H511.1 V184.4Z" fill="#000"/><path d="M591.3 188.7 L586.7 185.8 V187.5 H580.2 V189.9 H586.7 V191.6Z" fill="#000"/><path d="M544 226 L547.4 221.4 H545.35 V214.8 H542.65 V221.4 H540.6Z" fill="#000"/><path d="M626.95 158.8 L630.5 163.4 H628.3 V170 H625.6 V163.4 H623.4Z" fill="#000"/><path d="M618.4 208.2 L622 203.6 H619.75 V196.8 H617.05 V203.6 H614.8Z" fill="#000"/><text x="542.3" y="152.4" textLength="8.2" lengthAdjust="spacingAndGlyphs" font-family="Liberation Serif,serif" font-size="8.2" fill="#111">Y+</text><text x="509.2" y="190.2" textLength="8.2" lengthAdjust="spacingAndGlyphs" font-family="Liberation Serif,serif" font-size="8.2" fill="#111">X-</text><text x="580.1" y="184" textLength="8.6" lengthAdjust="spacingAndGlyphs" font-family="Liberation Serif,serif" font-size="8.2" fill="#111">X+</text><text x="547.9" y="221.8" textLength="7.4" lengthAdjust="spacingAndGlyphs" font-family="Liberation Serif,serif" font-size="8.2" fill="#111">Y-</text><text x="616.8" y="168.2" textLength="6.6" lengthAdjust="spacingAndGlyphs" font-family="Liberation Serif,serif" font-size="8.2" fill="#111">Z+</text><text x="622.6" y="203" textLength="7.2" lengthAdjust="spacingAndGlyphs" font-family="Liberation Serif,serif" font-size="8.2" fill="#111">Z-</text></svg>
<div class="grp" style="left:647.8px;top:172.3px;width:96.6px;height:75px"><div class="h" style="height:12.4px"></div></div>
<span class="t " style="left:654.8px;top:175.6px;font-size:6.5px;color:#111">Relative Fahrt</span><div class="rad on" style="left:651.4px;top:190.8px"></div><span class="t s64" style="left:661.4px;top:191.8px;">aus</span><div class="rad" style="left:651.4px;top:204.6px"></div><span class="t s64" style="left:661.6px;top:205.7px;">1.</span><div class="sp" style="left:672px;top:202.4px;width:37px"><span class="n" style="left:0;width:23.2px">50</span><div class="d" style="left:25.6px"></div><svg style="left:28px;top:2px" width="6" height="6" viewBox="0 0 6 6"><path d="M1 2.4 L3 .6 L5 2.4 M1 3.6 L3 5.4 L5 3.6" fill="none" stroke="#b5b5b5" stroke-width=".8"/></svg></div><span class="t s64" style="left:711.8px;top:205.7px;color:#7a7a7a">mm</span>
<div class="rad" style="left:651.4px;top:218.8px"></div><span class="t s64" style="left:661.6px;top:219.9px;">2.</span><div class="sp" style="left:672px;top:216.6px;width:37px"><span class="n" style="left:0;width:23.2px">200</span><div class="d" style="left:25.6px"></div><svg style="left:28px;top:2px" width="6" height="6" viewBox="0 0 6 6"><path d="M1 2.4 L3 .6 L5 2.4 M1 3.6 L3 5.4 L5 3.6" fill="none" stroke="#b5b5b5" stroke-width=".8"/></svg></div><span class="t s64" style="left:711.8px;top:219.9px;color:#7a7a7a">mm</span>
<div class="rad" style="left:651.4px;top:232.8px"></div><span class="t s64" style="left:661.6px;top:233.9px;">3.</span><div class="sp" style="left:672px;top:230.6px;width:37px"><span class="n" style="left:0;width:23.2px">720</span><div class="d" style="left:25.6px"></div><svg style="left:28px;top:2px" width="6" height="6" viewBox="0 0 6 6"><path d="M1 2.4 L3 .6 L5 2.4 M1 3.6 L3 5.4 L5 3.6" fill="none" stroke="#b5b5b5" stroke-width=".8"/></svg></div><span class="t s64" style="left:711.8px;top:233.9px;color:#7a7a7a">mm</span>
<div class="grp" style="left:494.6px;top:252px;width:261.6px;height:74.6px"><div class="h" style="height:11.6px"></div></div>
<span class="t " style="left:501.6px;top:256.1px;font-size:6.28px;color:#111">Geschwindigkeit in mm/Sek</span><div class="rad" style="left:498.6px;top:271.1px"></div><span class="t s64" style="left:509px;top:272.2px;">1.</span><div class="rad" style="left:498.6px;top:284.8px"></div><span class="t s64" style="left:509px;top:285.9px;">2. X,Y</span><div class="rad" style="left:498.6px;top:298.6px"></div><span class="t s64" style="left:509px;top:299.7px;">3. X,Y</span><div class="rad on" style="left:498.6px;top:312.5px"></div><span class="t s64" style="left:509px;top:313.6px;">4. X,Y</span><span class="t " style="left:532.4px;top:271px;font-size:6.55px">Schritt für Schritt</span>
<div class="sp" style="left:532px;top:280.4px;width:31.6px"><span class="n" style="left:0;width:19.4px">6</span><div class="d" style="left:21.6px;"></div><svg style="left:23.4px;top:2px" width="6" height="6" viewBox="0 0 6 6"><path d="M1 2.4 L3 .6 L5 2.4 M1 3.6 L3 5.4 L5 3.6" fill="none" stroke="#b5b5b5" stroke-width=".9"/></svg></div><div class="sp" style="left:581.6px;top:280.4px;width:31.6px"><span class="n" style="left:0;width:19.4px">1</span><div class="d" style="left:21.6px;"></div><svg style="left:23.4px;top:2px" width="6" height="6" viewBox="0 0 6 6"><path d="M1 2.4 L3 .6 L5 2.4 M1 3.6 L3 5.4 L5 3.6" fill="none" stroke="#b5b5b5" stroke-width=".9"/></svg></div><span class="t s64" style="left:572.8px;top:285.2px;color:#8c8c8c">Z</span>
<div class="sp" style="left:532px;top:294.5px;width:31.6px"><span class="n" style="left:0;width:19.4px">25</span><div class="d" style="left:21.6px;"></div><svg style="left:23.4px;top:2px" width="6" height="6" viewBox="0 0 6 6"><path d="M1 2.4 L3 .6 L5 2.4 M1 3.6 L3 5.4 L5 3.6" fill="none" stroke="#b5b5b5" stroke-width=".9"/></svg></div><div class="sp" style="left:581.6px;top:294.5px;width:31.6px"><span class="n" style="left:0;width:19.4px">11</span><div class="d" style="left:21.6px;"></div><svg style="left:23.4px;top:2px" width="6" height="6" viewBox="0 0 6 6"><path d="M1 2.4 L3 .6 L5 2.4 M1 3.6 L3 5.4 L5 3.6" fill="none" stroke="#b5b5b5" stroke-width=".9"/></svg></div><span class="t s64" style="left:572.8px;top:299px;color:#8c8c8c">Z</span>
<div class="sp w" style="left:532px;top:309.2px;width:31.6px"><span class="n" style="left:0;width:19.4px">150</span><div class="u" style="left:21.6px;width:8px"></div><svg style="left:23.4px;top:2px" width="6" height="6" viewBox="0 0 6 6"><path d="M1 2.4 L3 .6 L5 2.4 M1 3.6 L3 5.4 L5 3.6" fill="none" stroke="#2b66d4" stroke-width=".9"/></svg></div><div class="sp w" style="left:581.6px;top:309.2px;width:31.6px"><span class="n" style="left:0;width:19.4px">20</span><div class="u" style="left:21.6px;width:8px"></div><svg style="left:23.4px;top:2px" width="6" height="6" viewBox="0 0 6 6"><path d="M1 2.4 L3 .6 L5 2.4 M1 3.6 L3 5.4 L5 3.6" fill="none" stroke="#2b66d4" stroke-width=".9"/></svg></div><span class="t s64" style="left:572.8px;top:312.9px;color:#000">Z</span>
<div class="wb" style="left:496.4px;top:329.4px;width:83.4px;height:22px"></div><div class="ib" style="left:498.8px;top:331.2px;width:19.6px;height:18.6px"></div><span class="t s64" style="left:538.2px;top:338.3px;">Pumpe</span>
<svg style="left:501.4px;top:334px" width="15" height="13" viewBox="0 0 15 13"><path d="M6 3.4 V1.6 H4 V.8 H9.4 V1.6 H7.6 V3.4 H11.6 Q13.6 3.4 13.6 5.6 V7.6 H11.4 V6.2 H9.6 Q8.6 8 6.4 8 H1.2 V3.4Z" fill="none" stroke="#8d8d8d" stroke-width=".8"/><path d="M12.5 9 Q13.6 10.6 12.5 11.4 Q11.4 10.6 12.5 9Z" fill="none" stroke="#8d8d8d" stroke-width=".6"/></svg>
<div class="wb" style="left:583.6px;top:329.4px;width:83.4px;height:22px"></div><div class="ib" style="left:586px;top:331.2px;width:19.6px;height:18.6px"></div><span class="t s64" style="left:625.2px;top:338.3px;">Spindel</span>
<svg style="left:588.6px;top:332px" width="15" height="17" viewBox="0 0 15 17"><path d="M4.6 .6 V5 Q4.6 8 7.4 9.6 Q10.2 8 10.2 5 V.6" fill="none" stroke="#7d7d7d" stroke-width=".8"/><path d="M6.2 1.4 Q5.4 5 7.4 8.4 Q9 5 8.4 1.4" fill="none" stroke="#8d8d8d" stroke-width=".6"/><ellipse cx="7.4" cy="12.6" rx="5" ry="2.2" fill="none" stroke="#7d7d7d" stroke-width=".8"/><path d="M6 14.8 l1.8 -1 v2Z" fill="#7d7d7d"/></svg>
<div class="wb" style="left:671.2px;top:329.4px;width:41.4px;height:22px"></div><div class="a" style="left:673.6px;top:331.2px;width:19.6px;height:18.6px;border:1px solid #b98a2a;border-radius:2px;background:linear-gradient(#ffe9a8,#f9b92d 50%,#f5a91a)"></div><span class="t s64" style="left:698px;top:338.3px;">61</span>
<svg style="left:675.4px;top:332.6px" width="16" height="16" viewBox="0 0 16 16"><path d="M1.6 9.4 A6.4 6.4 0 0 1 14.4 9.4Z" fill="#fff4d0" stroke="#333" stroke-width=".7"/><circle cx="8" cy="7.6" r="1.5" fill="#222"/><path d="M8 3.6V5.2M4.6 4.8l1.1 1.1M11.4 4.8l-1.1 1.1M3.4 7.6H5M11 7.6h1.6M5 10.6l1-1M11 10.6l-1-1M8 10v1.6" stroke="#222" stroke-width=".6"/><path d="M2 12.6 h2.2 M11.6 12.6 h2.4 M12.8 11.4 v2.4" stroke="#222" stroke-width=".8"/></svg>
<div class="a" style="left:759.3px;top:117.6px;width:4.6px;height:266px;border-radius:2.3px;background:linear-gradient(90deg,#b5b5b5,#ececec 45%,#dadada 75%,#b9b9b9)"></div>
<div class="a" style="left:759.3px;top:176px;width:4.6px;height:207.6px;border-radius:0 0 2.3px 2.3px;background:linear-gradient(90deg,#b9c4b0,#9ee678 30%,#b4f090 55%,#8ddb68 80%,#b0b8a8)"></div>
<div class="a" style="left:757.2px;top:171.6px;width:8.8px;height:8.8px;border-radius:50%;background:radial-gradient(circle at 50% 40%,#cfe6fc,#a6d0f8);border:.7px solid #8fc0f2"></div>
<div class="a" style="left:757.2px;top:108.3px;width:8.8px;height:9.2px;border-radius:1.6px;border:.7px solid #9cc4f0;background:linear-gradient(#eef6fe,#c9e2fb 45%,#9ccbf7 55%,#c4e0fb)"></div><svg style="left:759.2px;top:110.3px" width="5" height="5" viewBox="0 0 5 5"><path d="M2.5 .3V4.7M.3 2.5H4.7" stroke="#3a66b4" stroke-width=".7"/></svg>
<div class="a" style="left:757.2px;top:385.2px;width:8.8px;height:9.2px;border-radius:1.6px;border:.7px solid #9cc4f0;background:linear-gradient(#eef6fe,#c9e2fb 45%,#9ccbf7 55%,#c4e0fb)"></div><svg style="left:759.2px;top:387.2px" width="5" height="5" viewBox="0 0 5 5"><path d="M.5 2H4.5" stroke="#3a66b4" stroke-width=".7"/></svg>
<div class="a" style="left:493.6px;top:553px;width:278.6px;height:19.6px;background:#dcdcdc;border-top:1px solid #d0d0d0"></div>
<div class="a" style="left:497.2px;top:552.6px;width:73.4px;height:18.2px;background:#fafafa;border:1px solid #c6c6c6;border-top:none;border-radius:0 0 2px 2px"></div>
<div class="a" style="left:572.8px;top:554px;width:35.2px;height:15.8px;background:#ececec;border:1px solid #cdcdcd;border-radius:1px"></div>
<div class="a" style="left:500.4px;top:555.4px;width:14.2px;height:14px;border:.9px solid #55534c;border-radius:2.4px;background:linear-gradient(#fff,#f1e9cf)"></div>
<svg style="left:502.4px;top:556.6px" width="10" height="12" viewBox="0 0 10 12"><path d="M2.6 6 V2.4 Q2.6 1.4 3.6 1.6 V1 Q4.6 .4 5.4 1 Q6.4 .6 7 1.6 Q7.8 1.6 7.8 2.6 V6 Q7.8 8.4 5.2 8.4 Q2.6 8.4 2.6 6Z" fill="#e9e9e9" stroke="#7b7b7b" stroke-width=".7"/><path d="M1.4 10.4 h1.4 l-.3 -.8 l1.3 1 l-1.3 1 l.3 -.8 h-1.4Z M4.4 10.4 h1.4 l-.3 -.8 l1.3 1 l-1.3 1 l.3 -.8 h-1.4Z M7 10.4 h1 l-.3 -.8 l1.3 1 l-1.3 1 l.3 -.8 h-1Z" fill="#2468e0" stroke="#2468e0" stroke-width=".3"/></svg>
<span class="t " style="left:517.2px;top:560.1px;font-size:6.3px;color:#111">Manuell Bewegen</span><span class="t " style="left:575.3px;top:560.1px;font-size:6.3px;color:#111">Simulation</span>
<div class="a" style="left:0;top:576px;width:774px;height:18.8px;background:linear-gradient(#f8f8f8,#f0f0f0 20%,#ebebeb);border-top:1px solid #dadada"></div>
<span class="t" style="left:4.2px;top:581.7px;font-size:6.6px">X= 1026,803 Y= 142,567</span>
<div class="ssep" style="left:96.8px"></div><div class="ssep" style="left:137.6px"></div><div class="ssep" style="left:156.4px"></div><div class="ssep" style="left:175px"></div><div class="ssep" style="left:284px"></div><div class="ssep" style="left:317.6px"></div><div class="ssep" style="left:349px"></div><div class="ssep" style="left:391.6px"></div><div class="ssep" style="left:459.8px"></div><div class="ssep" style="left:741px"></div>
<div class="a" style="left:101.6px;top:577px;width:14.4px;height:14.6px;border:.8px solid #3aa526;border-radius:1.5px;background:linear-gradient(#92f570,#4bd82c)"></div>
<svg style="left:104px;top:578.6px" width="10" height="12" viewBox="0 0 10 12"><path d="M5 1 V10.2 M5 7.6 L2.2 5.4 V3.8 M5 8.6 L7.8 6.4 V4.6" stroke="#0f3a0a" stroke-width=".9" fill="none"/><path d="M5 0 l-1.3 2 h2.6Z" fill="#0f3a0a"/><circle cx="5" cy="10.4" r="1.1" fill="#0f3a0a"/><rect x="1.4" y="2.6" width="1.6" height="1.6" fill="#0f3a0a"/><circle cx="7.8" cy="4.2" r=".9" fill="#0f3a0a"/></svg>
<svg style="left:121px;top:577px" width="15" height="15" viewBox="0 0 15 15"><g transform="rotate(-40 7.5 7.5)"><rect x="1" y="5" width="13" height="5" rx=".6" fill="#2f7be6" stroke="#1a4fb0" stroke-width=".5"/><rect x="5" y="2.6" width="5" height="9.8" rx=".6" fill="#4a93f2" stroke="#1a4fb0" stroke-width=".5"/><path d="M2.4 6.2 V8.8 M12.6 6.2 V8.8" stroke="#bcd9fb" stroke-width=".7"/></g></svg>
<span class="t" style="left:140.6px;top:581.7px;font-size:6.4px">ABS</span><span class="t" style="left:160.4px;top:581.7px;font-size:6.4px">MM</span>
<div class="a" style="left:178px;top:580px;width:73.4px;height:9.2px;border:1px solid #d0d0d0;border-radius:1.5px;background:linear-gradient(#f4f4f4,#e6e6e6)"></div>
<div class="a" style="left:183.6px;top:583.8px;width:60px;height:1.2px;background:#c8c8c8"></div><div class="a" style="left:214.6px;top:581.6px;width:1px;height:5.6px;background:#cdcdcd"></div>
<div class="a" style="left:232.6px;top:580.6px;width:7.6px;height:7.6px;border:.7px solid #c2c2c2;border-radius:50%;background:linear-gradient(#f6f6f6,#dcdcdc)"></div>
<span class="t" style="left:180px;top:581.8px;font-size:5px;color:#bdbdbd">−</span><span class="t" style="left:246.8px;top:581.8px;font-size:5px;color:#bdbdbd">+</span>
<span class="t" style="left:254.8px;top:581.7px;font-size:6.4px">100%</span><span class="t" style="left:289.8px;top:581.7px;font-size:6.4px">T25</span>
<span class="t" style="left:743.6px;top:581.4px;font-size:7px">F1 Hilfe</span>
<div class="a" style="left:0;top:594.6px;width:774px;height:6px;background:linear-gradient(90deg,rgba(255,255,255,0),rgba(255,255,255,.12) 78%,rgba(0,0,20,.25)),linear-gradient(#4f89c6,#2e69ad 45%,#1f5597)"></div>
<div class="a" style="left:8px;top:595.4px;width:15px;height:12px;border-radius:50%;background:radial-gradient(#cfe0f2,#7fa6d2)"></div>
<div class="a" style="left:46px;top:596.4px;width:7px;height:4px;background:#c9b48a"></div>
<div class="a" style="left:157.6px;top:595.6px;width:17px;height:5px;background:#e3122c"></div>
<div class="a" style="left:198px;top:596.2px;width:11.6px;height:10px;border-radius:50%;background:#7fc0ec"></div>
<div class="a" style="left:223.4px;top:594.8px;width:35.4px;height:6px;background:linear-gradient(90deg,#d5dbe3,#e9edf2 50%,#d5dbe3);border:.6px solid #f4f6f9;border-bottom:none;border-radius:1.5px 1.5px 0 0"></div><div class="a" style="left:236px;top:596.4px;width:9px;height:4px;background:#6d7076"></div>
<div class="a" style="left:260.6px;top:594.8px;width:35.6px;height:6px;background:linear-gradient(90deg,#a9c3e2,#cad9ec 50%,#a9c3e2);border:.6px solid #dbe6f3;border-bottom:none;border-radius:1.5px 1.5px 0 0"></div><div class="a" style="left:282px;top:596.6px;width:6px;height:4px;background:#e0a03a"></div>
</body>
</html>
